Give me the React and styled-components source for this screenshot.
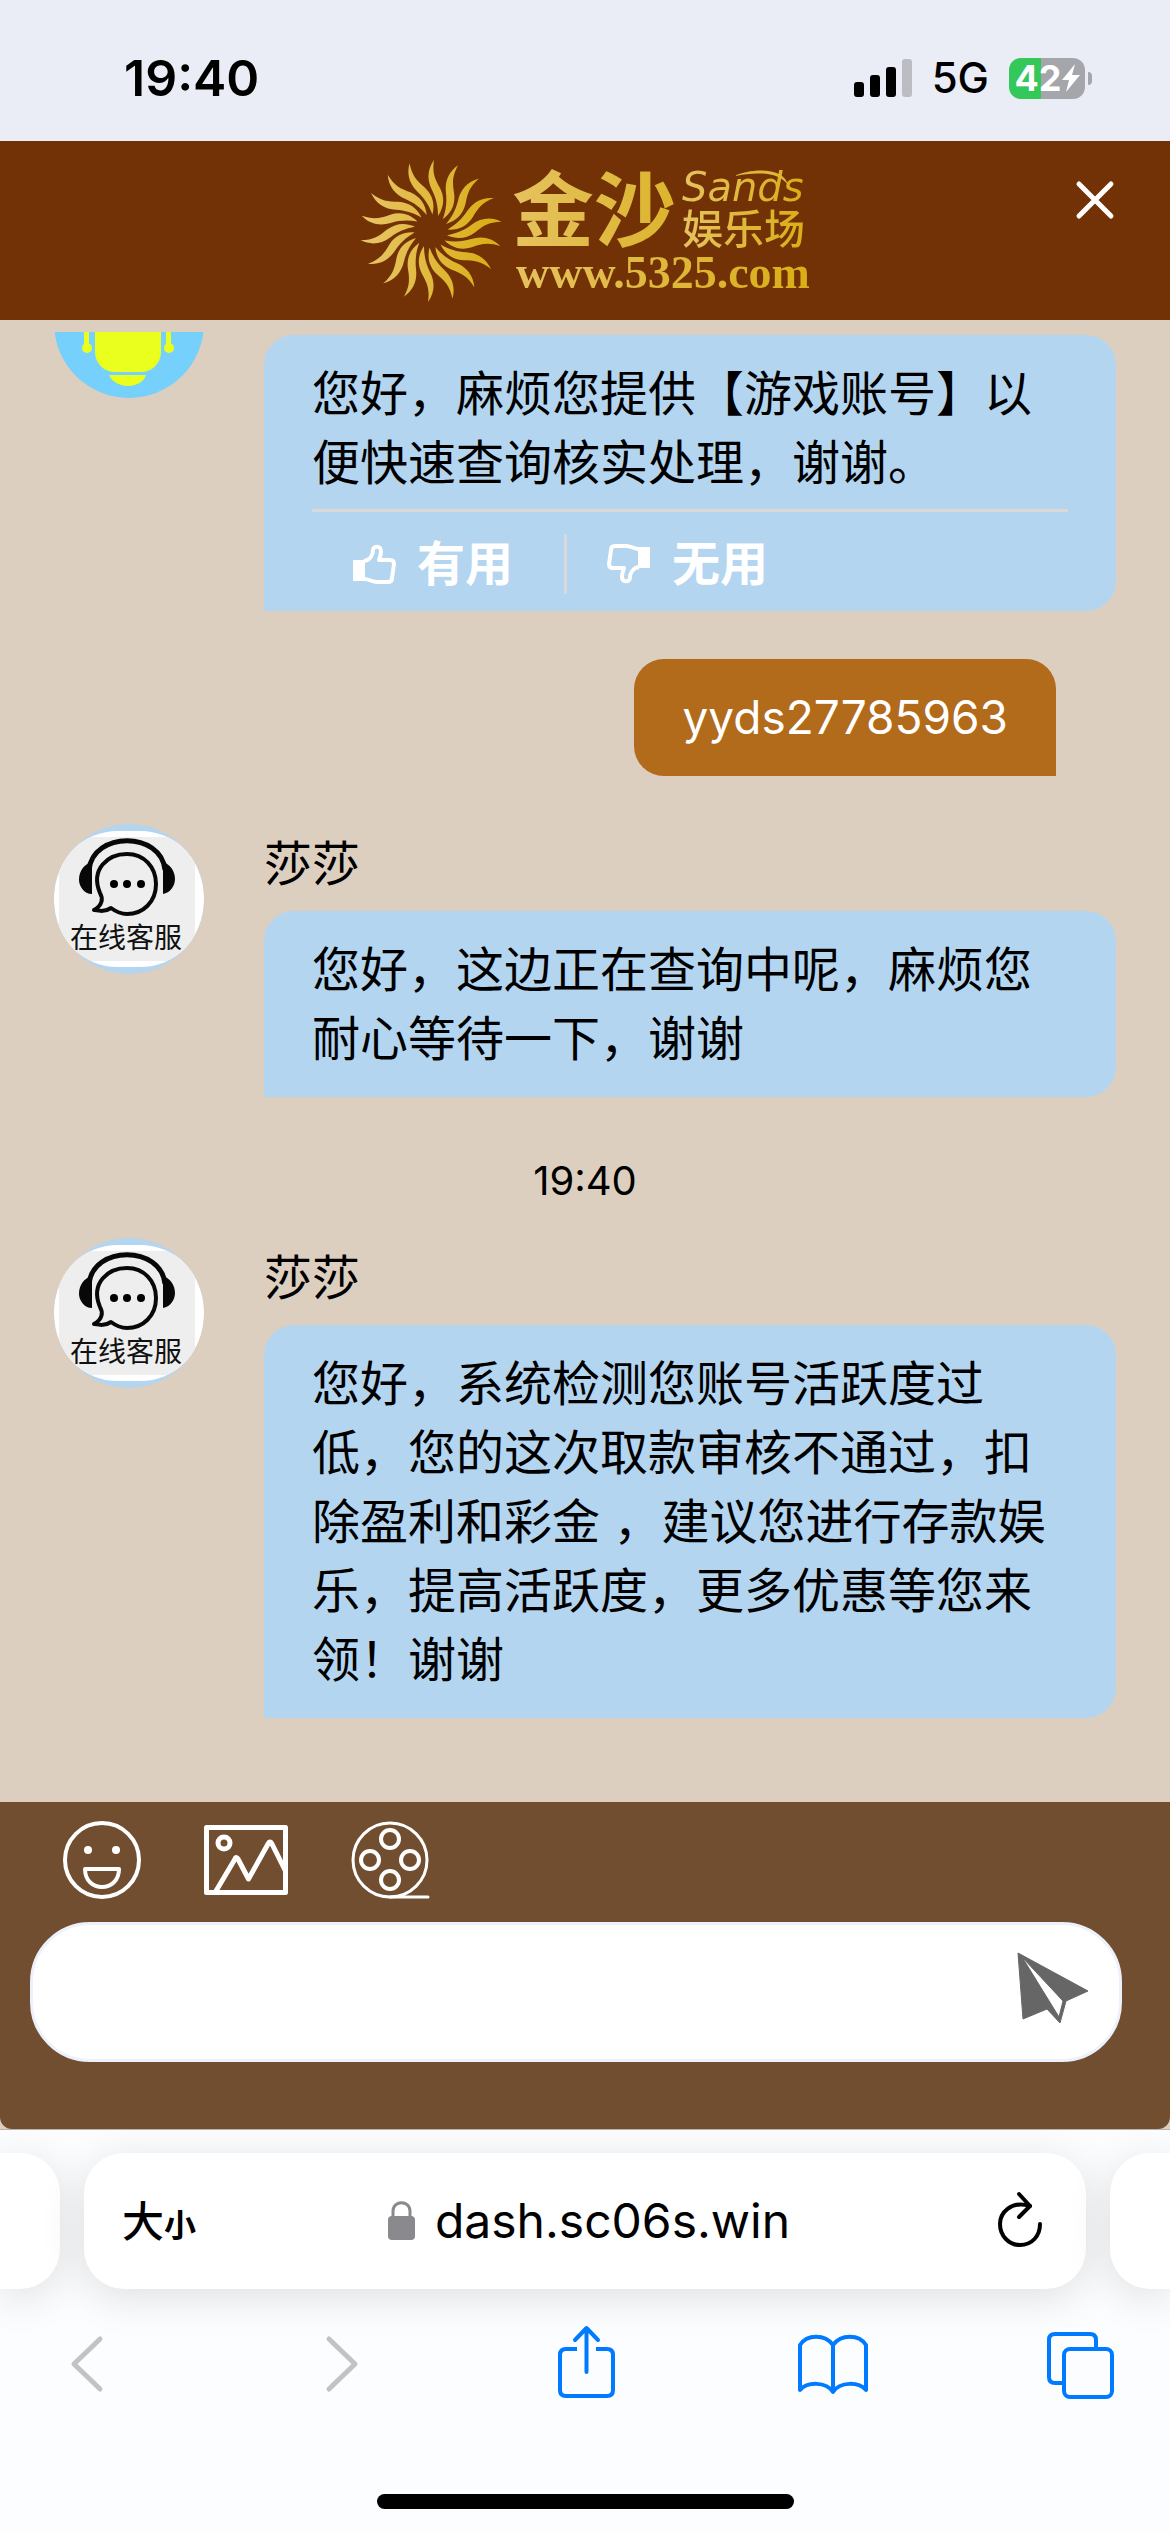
import React from "react";
import styled, { createGlobalStyle, css } from "styled-components";

const GlobalStyle = createGlobalStyle`
  *, *::before, *::after { box-sizing: border-box; }
  body {
    margin: 0;
    background: #fcfdff;
    color: #000;
    font-family: Inter, "Noto Sans CJK SC", sans-serif;
    -webkit-font-smoothing: antialiased;
  }
  button, input { font: inherit; color: inherit; }
  svg { display: block; flex: none; }
`;

const IconButton = styled.button`
  display: flex;
  align-items: center;
  justify-content: center;
  flex: none;
  padding: 0;
  border: 0;
  background: none;
  cursor: pointer;
`;

const Screen = styled.div`
  display: flex;
  flex-direction: column;
  height: 100vh;
`;

/* ---------- status bar ---------- */

const StatusBar = styled.div`
  display: flex;
  align-items: center;
  justify-content: space-between;
  flex: none;
  height: 141px;
  padding: 15px 78px 0 124px;
  background: #eaedf5;
`;

const Clock = styled.time`
  font-size: 50px;
  line-height: 60px;
  font-weight: 600;
`;

const StatusIcons = styled.div`
  display: flex;
  align-items: center;
  gap: 20px;
`;

const Network = styled.span`
  font-size: 42px;
  line-height: 48px;
  font-weight: 500;
`;

const BatteryWrap = styled.div`
  display: flex;
  align-items: center;
  gap: 3px;
`;

const BatteryBody = styled.div`
  display: flex;
  align-items: center;
  justify-content: center;
  width: 76px;
  height: 41px;
  border-radius: 12px;
  background: linear-gradient(90deg, #34c759 42%, #a4a6ab 42%);
  color: #fff;
  font-size: 36px;
  line-height: 41px;
  font-weight: 700;
`;

const BatteryTip = styled.div`
  width: 4px;
  height: 13px;
  border-radius: 0 4px 4px 0;
  background: #a4a6ab;
`;

/* ---------- header ---------- */

const Header = styled.header`
  display: grid;
  grid-template-columns: 1fr auto 1fr;
  align-items: center;
  flex: none;
  height: 179px;
  background: #723206;
`;

const Brand = styled.div`
  grid-column: 2;
  display: flex;
  align-items: center;
  gap: 10px;
`;

const BrandText = styled.div`
  display: flex;
  flex-direction: column;
`;

const BrandRow = styled.div`
  display: flex;
  align-items: center;
  gap: 6px;
`;

const GoldText = styled.span`
  background: linear-gradient(90deg, ${(p) => p.$from || "#e6c25f"}, ${(p) => p.$to || "#d9ae16"});
  background-clip: text;
  -webkit-background-clip: text;
  color: transparent;
`;

const BrandName = styled(GoldText)`
  padding-top: 4px;
  font-family: "Liberation Serif", "Noto Sans CJK SC", serif;
  font-size: 82px;
  line-height: 80px;
  font-weight: 700;
`;

const BrandSide = styled.div`
  display: flex;
  flex-direction: column;
`;

const BrandLatinRow = styled.div`
  position: relative;
  display: flex;
  height: 36px;
`;

const BrandLatin = styled(GoldText)`
  font-family: "DejaVu Sans", sans-serif;
  font-size: 40px;
  line-height: 36px;
  font-style: italic;
`;

const Swoosh = styled.svg`
  position: absolute;
  top: 0;
  left: 52px;
`;

const BrandSub = styled(GoldText)`
  padding-top: 2px;
  font-family: "Liberation Serif", "Noto Sans CJK SC", serif;
  font-size: 41px;
  line-height: 46px;
  font-weight: 500;
`;

const BrandUrl = styled(GoldText)`
  padding-left: 4px;
  font-family: "Liberation Serif", serif;
  font-size: 46px;
  line-height: 40px;
  font-weight: 700;
`;

const CloseButton = styled(IconButton)`
  align-self: start;
  justify-self: end;
  margin: 37px 53px 0 0;
`;

/* ---------- conversation ---------- */

const Conversation = styled.main`
  display: flex;
  flex-direction: column-reverse;
  flex: 1;
  min-height: 0;
  overflow-y: auto;
  scrollbar-width: none;
  border-top: 12px solid #dccfbf;
  background: #dccfbf;
`;

const Thread = styled.div`
  display: flex;
  flex-direction: column;
  gap: 48px;
  padding: 0 54px 84px;
`;

const Message = styled.article`
  display: flex;
  align-items: flex-start;
  gap: 60px;
`;

const MessageBody = styled.div`
  flex: 1;
  min-width: 0;
  padding-top: ${(p) => (p.$named ? 0 : 87)}px;
`;

const Sender = styled.div`
  height: 87px;
  padding-top: 5px;
  font-size: 48px;
  line-height: 69px;
`;

const Bubble = styled.div`
  padding: 24px 48px ${(p) => (p.$rated ? 0 : 24)}px;
  border-radius: 30px 30px 30px 0;
  background: #b4d5f0;
  font-size: 48px;
  line-height: 69px;
`;

const OwnBubble = styled.div`
  align-self: flex-end;
  margin-right: 60px;
  padding: 24px 48px;
  border-radius: 30px 30px 0 30px;
  background: #b26a1b;
  color: #fff;
  font-size: 46px;
  line-height: 69px;
`;

const Feedback = styled.div`
  display: flex;
  align-items: center;
  height: 102px;
  margin-top: 12px;
  padding-top: 4px;
  border-top: 3px solid #d9d9d9;
`;

const FeedbackButton = styled(IconButton)`
  gap: 21px;
  height: 60px;
  padding: 0 51px 0 40px;
  color: #fff;
  font-weight: 600;
  line-height: 60px;

  & + & { border-left: 3px solid #d9d9d9; }
`;

const Timestamp = styled.time`
  align-self: center;
  padding-top: 12px;
  height: 45px;
  font-size: 40px;
  line-height: 48px;
`;

/* ---------- composer ---------- */

const ComposerWrap = styled.div`
  flex: none;
  background: #dccfbf;
  border-bottom: 1px solid #b9b3ae;
`;

const Composer = styled.form`
  padding: 18px 48px 67px 30px;
  border-radius: 0 0 12px 12px;
  background: #724e31;
`;

const Tools = styled.div`
  display: flex;
  align-items: center;
  gap: 62px;
  padding: 0 32px;
  margin-bottom: 22px;
`;

const Field = styled.div`
  display: flex;
  align-items: center;
  height: 140px;
  padding: 0 30px 0 48px;
  border: 3px solid #edf1fc;
  border-radius: 60px;
  background: #fff;
`;

const MessageInput = styled.input`
  flex: 1;
  min-width: 0;
  height: 100px;
  padding: 0;
  border: 0;
  outline: 0;
  background: none;
  font-size: 48px;
`;

/* ---------- browser controls ---------- */

const Browser = styled.footer`
  flex: none;
  height: 402px;
  padding-top: 23px;
  overflow: hidden;
  background: #fcfdff;
`;

const TabStrip = styled.div`
  display: flex;
  gap: 24px;
`;

const card = css`
  height: 136px;
  background: #fff;
  box-shadow: 0 8px 44px rgba(0, 0, 0, 0.12);
`;

const TabEdge = styled.div`
  ${card}
  flex: none;
  width: 60px;
  border-radius: ${(p) => (p.$side === "left" ? "0 40px 40px 0" : "40px 0 0 40px")};
`;

const AddressBar = styled.div`
  ${card}
  display: grid;
  grid-template-columns: 1fr auto 1fr;
  align-items: center;
  flex: 1;
  padding: 0 38px;
  border-radius: 40px;
`;

const TextSizeButton = styled(IconButton)`
  justify-self: start;
  align-items: baseline;
  font-family: "Noto Sans CJK SC", sans-serif;
  font-size: 42px;
  line-height: 60px;
  font-weight: 500;
`;

const SmallGlyph = styled.span`
  font-size: 32px;
  font-weight: 700;
`;

const UrlButton = styled(IconButton)`
  gap: 20px;
  padding-left: 8px;
  font-size: 48px;
  line-height: 60px;
`;

const ReloadButton = styled(IconButton)`
  justify-self: end;
`;

const Toolbar = styled.nav`
  display: flex;
  justify-content: space-between;
  padding: 34px 54px 0 51px;
`;

const HomeIndicator = styled.div`
  width: 417px;
  height: 15px;
  margin: 91px auto 0;
  border-radius: 8px;
  background: #000;
`;

/* ---------- drawings ---------- */

const RAY = "M3 -71C-4 -61 -4 -51 1 -41C5 -33 7 -25 7 -15C13 -24 14 -33 9 -43C4 -52 1 -58 3 -71Z";

const SunLogo = () => (
  <svg width="142" height="142" viewBox="-71 -71 142 142" aria-hidden="true">
    <defs>
      <linearGradient id="sunGold">
        <stop offset="0" stopColor="#e8c569" />
        <stop offset="1" stopColor="#d9ad10" />
      </linearGradient>
      <clipPath id="sunRays">
        {Array.from({ length: 18 }, (_, i) => (
          <path key={i} d={RAY} transform={`rotate(${i * 20})`} />
        ))}
      </clipPath>
    </defs>
    <rect x="-71" y="-71" width="142" height="142" fill="url(#sunGold)" clipPath="url(#sunRays)" />
  </svg>
);

const AgentAvatar = () => (
  <svg width="150" height="150" viewBox="0 0 150 150" role="img" aria-label="在线客服">
    <defs>
      <clipPath id="avatarRound"><circle cx="75" cy="75" r="75" /></clipPath>
      <clipPath id="avatarPhoto"><rect y="7" width="150" height="136" rx="64" /></clipPath>
    </defs>
    <g clipPath="url(#avatarRound)">
      <rect width="150" height="150" fill="#b4d5f0" />
      <g clipPath="url(#avatarPhoto)">
        <rect width="150" height="150" fill="#fff" />
        <rect x="5" y="13" width="136" height="124" fill="#eee" />
        <g fill="none" stroke="#080808">
          <path d="M35 46C39 7 107 7 111 46" strokeWidth="5" />
          <path d="M57 84C51 88 46 87 40 86C49 81 49 74 46 69C36 45 54 30 73 30C90 30 102 43 102 60C102 78 89 90 73 90C67 90 61 87 57 84Z" strokeWidth="4" strokeLinejoin="round" />
        </g>
        <path d="M38 38V70C30 70 25 62 25 56C25 47 30 40 38 38ZM109 38V70C116 69 121 62 121 55C121 47 116 40 109 38Z" fill="#080808" />
        <circle cx="60" cy="60" r="4" /><circle cx="73" cy="60" r="4" /><circle cx="87" cy="60" r="4" />
        <text x="16" y="124" fontSize="28" fontFamily="'Noto Sans CJK SC', sans-serif" fill="#111">在线客服</text>
      </g>
    </g>
  </svg>
);

const RobotAvatar = () => (
  <svg width="150" height="150" viewBox="0 0 150 150" aria-hidden="true">
    <circle cx="75" cy="75" r="75" fill="#75d1fb" />
    <g fill="#ebff1f">
      <rect x="41" y="60" width="66" height="64" rx="20" />
      <rect x="30" y="64" width="5" height="38" /><circle cx="33" cy="100" r="5" />
      <rect x="112" y="64" width="5" height="38" /><circle cx="115" cy="100" r="5" />
      <path d="M55 127H92C90 134 82 138 74 138C66 138 58 134 55 127Z" />
    </g>
  </svg>
);

const Thumb = ({ down }) => (
  <svg width="44" height="44" viewBox="0 0 44 44" aria-hidden="true">
    <g transform={down ? "rotate(180 22 22)" : undefined}>
      <path d="M1 18H13V39H1Z" fill="#fff" />
      <path d="M12 19C18 18 21 13 21 8C21 4 29 3 29 9C29 13 28 15 27 18H38C41 18 42 20 42 22L40 36C40 39 38 40 36 40H25C20 40 17 37 12 37" fill="none" stroke="#fff" strokeWidth="4" strokeLinejoin="round" />
    </g>
  </svg>
);

const Glyph = ({ w = 72, h = 80, color = "#007aff", sw = 5, children }) => (
  <svg width={w} height={h} viewBox={`0 0 ${w} ${h}`} fill="none" stroke={color} strokeWidth={sw} strokeLinecap="round" strokeLinejoin="round" aria-hidden="true">
    {children}
  </svg>
);

/* ---------- page ---------- */

const AgentMessage = ({ name, children }) => (
  <Message>
    <AgentAvatar />
    <MessageBody $named>
      <Sender>{name}</Sender>
      <Bubble>{children}</Bubble>
    </MessageBody>
  </Message>
);

export default function App() {
  return (
    <Screen>
      <GlobalStyle />
      <StatusBar>
        <Clock>19:40</Clock>
        <StatusIcons>
          <svg width="58" height="38" viewBox="0 0 58 38" aria-hidden="true">
            <rect x="0" y="23" width="10" height="15" rx="3" />
            <rect x="16" y="16" width="10" height="22" rx="3" />
            <rect x="32" y="8" width="10" height="30" rx="3" />
            <rect x="48" y="0" width="10" height="38" rx="3" fill="#bbbdc3" />
          </svg>
          <Network>5G</Network>
          <BatteryWrap>
            <BatteryBody>
              42
              <svg width="18" height="28" viewBox="0 0 18 28" aria-hidden="true">
                <path d="M13 0L0 16H7L4 28L18 11H10Z" fill="#fff" />
              </svg>
            </BatteryBody>
            <BatteryTip />
          </BatteryWrap>
        </StatusIcons>
      </StatusBar>

      <Header>
        <Brand>
          <SunLogo />
          <BrandText>
            <BrandRow>
              <BrandName $to="#dcb42c">金沙</BrandName>
              <BrandSide>
                <BrandLatinRow>
                  <BrandLatin>Sands</BrandLatin>
                  <Swoosh width="56" height="18" viewBox="0 0 56 18" aria-hidden="true">
                    <path d="M0 7C18 -1 50 -2 54 16C44 2 22 3 0 7Z" fill="#dfb736" />
                  </Swoosh>
                </BrandLatinRow>
                <BrandSub>娱乐场</BrandSub>
              </BrandSide>
            </BrandRow>
            <BrandUrl>www.5325.com</BrandUrl>
          </BrandText>
        </Brand>
        <CloseButton type="button" aria-label="关闭">
          <Glyph w={44} h={44} color="#fff">
            <path d="M6 6L38 38M38 6L6 38" />
          </Glyph>
        </CloseButton>
      </Header>

      <Conversation>
        <Thread>
          <Message>
            <RobotAvatar />
            <MessageBody>
              <Bubble $rated>
                您好，麻烦您提供【游戏账号】以便快速查询核实处理，谢谢。
                <Feedback>
                  <FeedbackButton type="button"><Thumb />有用</FeedbackButton>
                  <FeedbackButton type="button"><Thumb down />无用</FeedbackButton>
                </Feedback>
              </Bubble>
            </MessageBody>
          </Message>
          <OwnBubble>yyds27785963</OwnBubble>
          <AgentMessage name="莎莎">您好，这边正在查询中呢，麻烦您耐心等待一下，谢谢</AgentMessage>
          <Timestamp>19:40</Timestamp>
          <AgentMessage name="莎莎">
            您好，系统检测您账号活跃度过低，您的这次取款审核不通过，扣除盈利和彩金 ，建议您进行存款娱乐，提高活跃度，更多优惠等您来领！谢谢
          </AgentMessage>
        </Thread>
      </Conversation>

      <ComposerWrap>
        <Composer onSubmit={(e) => e.preventDefault()}>
          <Tools>
            <IconButton type="button" aria-label="表情">
              <Glyph w={80} h={80} color="#fff" sw={4}>
                <circle cx="40" cy="40" r="37" />
                <path d="M23 49H57C57 73 23 73 23 49Z" />
                <circle cx="26" cy="30" r="4" fill="#fff" stroke="none" />
                <circle cx="54" cy="30" r="4" fill="#fff" stroke="none" />
              </Glyph>
            </IconButton>
            <IconButton type="button" aria-label="图片">
              <Glyph w={84} h={70} color="#fff" sw={5}>
                <path d="M2.5 2.5H81.5V67.5H2.5Z" />
                <circle cx="20" cy="18" r="6" />
                <path d="M12 66L31 34Q32 31 34 34L44.500 54L64 19Q66 15 68 19L81 45" />
              </Glyph>
            </IconButton>
            <IconButton type="button" aria-label="视频">
              <Glyph w={80} h={80} color="#fff" sw={3}>
                <circle cx="40" cy="40" r="37" />
                <g strokeWidth="4">
                  <circle cx="40" cy="19" r="9" /><circle cx="20" cy="40" r="9" />
                  <circle cx="60" cy="40" r="9" /><circle cx="40" cy="60" r="9" />
                </g>
                <path d="M40 77H78" />
              </Glyph>
            </IconButton>
          </Tools>
          <Field>
            <MessageInput type="text" aria-label="输入消息" />
            <IconButton type="submit" aria-label="发送">
              <svg width="72" height="80" viewBox="0 0 72 80" aria-hidden="true">
                <path d="M1 1L71 39L49 49L43 71L30 57L6 67ZM5 5L42 65L46 49Z" fill="#666" fillRule="evenodd" stroke="#666" strokeWidth="1" strokeLinejoin="round" />
              </svg>
            </IconButton>
          </Field>
        </Composer>
      </ComposerWrap>

      <Browser>
        <TabStrip>
          <TabEdge $side="left" />
          <AddressBar>
            <TextSizeButton type="button" aria-label="大小">
              大<SmallGlyph>小</SmallGlyph>
            </TextSizeButton>
            <UrlButton type="button">
              <svg width="27" height="42" viewBox="0 0 27 42" aria-hidden="true">
                <rect y="16" width="27" height="24" rx="4" fill="#8a8a8e" />
                <path d="M5 18V11C5 0 22 0 22 11V18" fill="none" stroke="#8a8a8e" strokeWidth="3" />
              </svg>
              dash.sc06s.win
            </UrlButton>
            <ReloadButton type="button" aria-label="重新加载">
              <Glyph w={56} h={64} color="#000" sw={4}>
                <path d="M38 17C19 11 8 24 8 35C8 47 17 56 28 56C40 56 48 47 48 35" />
                <path d="M27 5L38 17L27 28" />
              </Glyph>
            </ReloadButton>
          </AddressBar>
          <TabEdge $side="right" />
        </TabStrip>
        <Toolbar>
          <IconButton type="button" aria-label="后退">
            <Glyph color="#c3c3c5"><path d="M49 16L23 41L49 66" /></Glyph>
          </IconButton>
          <IconButton type="button" aria-label="前进">
            <Glyph color="#c3c3c5"><path d="M30 16L56 41L30 66" /></Glyph>
          </IconButton>
          <IconButton type="button" aria-label="分享">
            <Glyph sw={4}>
              <path d="M29 26H18Q12 26 12 32V67Q12 73 18 73H59Q65 73 65 67V32Q65 26 59 26H48" strokeLinecap="butt" />
              <path d="M38.500 49V6M27 17L38.500 5L50 17" />
            </Glyph>
          </IconButton>
          <IconButton type="button" aria-label="书签">
            <Glyph sw={4}>
              <path d="M37 22C29 11 11 11 4 22V67C11 59 30 58 37 69C44 58 63 59 70 67V22C63 11 45 11 37 22ZM37 22V68" />
            </Glyph>
          </IconButton>
          <IconButton type="button" aria-label="标签页">
            <Glyph sw={4}>
              <path d="M18 60H11Q5 60 5 54V17Q5 11 11 11H46Q52 11 52 17V25" strokeLinecap="butt" />
              <rect x="20" y="26" width="48" height="48" rx="6" />
            </Glyph>
          </IconButton>
        </Toolbar>
        <HomeIndicator />
      </Browser>
    </Screen>
  );
}
